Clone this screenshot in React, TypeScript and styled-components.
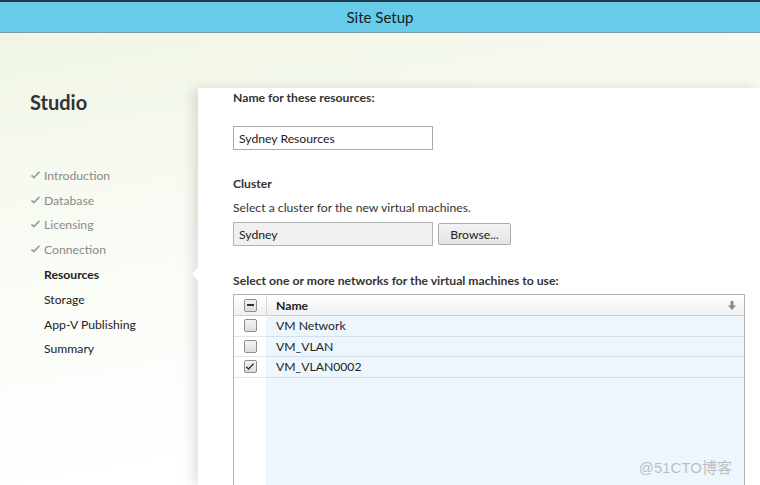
import React from 'react';
import styled, {createGlobalStyle} from 'styled-components';

const GlobalStyle = createGlobalStyle`
  html, body {
    margin: 0;
    padding: 0;
    background: #ffffff;
  }
  body {
    font-family: Lato, 'Noto Sans', sans-serif;
    font-size: 12.2px;
    color: #222;
  }
`;

const Window = styled.div`
  width: 760px;
  height: 485px;
  overflow: hidden;
  display: flex;
  flex-direction: column;
  position: relative;
  background: linear-gradient(170deg, #eef5e3 0%, #f5f9ee 25%, #fbfdf8 55%, #ffffff 80%);
`;

const TitleBar = styled.header`
  height: 30px;
  flex: none;
  border-top: 2px solid #1f3a48;
  border-bottom: 1px solid #7f9aa6;
  background: #67cbea;
  display: flex;
  align-items: center;
  justify-content: center;
  font-size: 15px;
  color: #1b1b1b;
  .title {
    margin-top: -1px;
  }
`;

const Body = styled.div`
  flex: 1;
  display: flex;
  min-height: 0;
`;

const Sidebar = styled.aside`
  width: 198px;
  flex: none;
  padding: 56px 0 0 30px;
  box-sizing: border-box;
  .studio {
    font-size: 20px;
    font-weight: 700;
    color: #333;
    margin: 0;
    line-height: 26px;
  }
`;

const StepList = styled.ul`
  list-style: none;
  margin: 48px 0 0 0;
  padding: 0;
`;

const Step = styled.li<{done?: boolean; current?: boolean}>`
  height: 24.8px;
  display: flex;
  align-items: center;
  color: ${p => (p.done ? '#8a8a8a' : '#222')};
  font-weight: ${p => (p.current ? 700 : 400)};
  .check {
    width: 14px;
    display: inline-flex;
    color: #9a9a9a;
  }
`;

const Panel = styled.main`
  flex: 1;
  margin-top: 55px;
  background: #fff;
  position: relative;
  padding: 0 0 0 35px;
  box-shadow: -5px 0 12px rgba(0, 0, 0, 0.12);
  &::before {
    content: '';
    position: absolute;
    left: -6px;
    top: 179px;
    border-style: solid;
    border-width: 7px 6px 7px 0;
    border-color: transparent #fff transparent transparent;
  }
`;

const Label = styled.div<{mt: number}>`
  margin-top: ${p => p.mt}px;
  font-weight: 700;
  color: #333;
  line-height: 16px;
`;

const Hint = styled.div`
  margin-top: 8px;
  color: #333;
  line-height: 16px;
`;

const Field = styled.div<{disabled?: boolean; mt: number}>`
  margin-top: ${p => p.mt}px;
  width: 200px;
  height: 24px;
  box-sizing: border-box;
  border: 1px solid ${p => (p.disabled ? '#b4b4b4' : '#a9a9a9')};
  background: ${p => (p.disabled ? '#f0f0f0' : '#fff')};
  padding: 0 5px;
  display: flex;
  align-items: center;
  color: #222;
`;

const FieldRow = styled.div`
  display: flex;
  align-items: flex-start;
  gap: 5px;
  margin-top: 6px;
  ${Field} {
    margin-top: 0;
  }
`;

const Button = styled.button`
  margin-top: 1px;
  width: 73px;
  height: 22px;
  border: 1px solid #acacac;
  border-radius: 2px;
  background: linear-gradient(#f3f3f3, #e4e4e4);
  font-family: inherit;
  font-size: 12.2px;
  color: #222;
  padding: 0;
`;

const Table = styled.div`
  margin-top: 5px;
  width: 512px;
  height: 200px;
  border: 1px solid #b3b3b3;
  box-sizing: border-box;
  display: grid;
  grid-template-columns: 32px 1fr;
  grid-template-rows: 21px repeat(3, 20.5px) 1fr;
  background: linear-gradient(to right, #fff 32px, #eef6fd 32px);
`;

const HeaderCell = styled.div<{first?: boolean}>`
  background: linear-gradient(#ffffff, #f0f0f0);
  border-bottom: 1px solid #d0d0d0;
  border-left: ${p => (p.first ? 'none' : '1px solid #d6d6d6')};
  display: flex;
  align-items: center;
  justify-content: ${p => (p.first ? 'center' : 'space-between')};
  padding: ${p => (p.first ? '0' : '0 8px 0 9px')};
  font-weight: 700;
  color: #222;
  .sort {
    color: #8a8a8a;
    display: inline-flex;
  }
`;

const Cell = styled.div<{first?: boolean}>`
  border-bottom: 1px solid ${p => (p.first ? '#e6e6e6' : '#d3e1ed')};
  background: ${p => (p.first ? '#fff' : '#eef6fd')};
  display: flex;
  align-items: center;
  justify-content: ${p => (p.first ? 'center' : 'flex-start')};
  padding: ${p => (p.first ? '0' : '0 0 0 10px')};
  color: #222;
`;

const Box = styled.span`
  width: 13px;
  height: 13px;
  box-sizing: border-box;
  border: 1px solid #8e8f8f;
  border-radius: 2px;
  background: linear-gradient(#f4f4f4, #dcdcdc);
  display: inline-flex;
  align-items: center;
  justify-content: center;
  .dash {
    width: 7px;
    height: 2px;
    background: #333;
  }
`;

const Watermark = styled.div`
  position: absolute;
  right: 28px;
  bottom: 8px;
  font-family: 'Liberation Sans', 'Noto Sans CJK SC', sans-serif;
  font-size: 15px;
  color: rgba(150, 150, 150, 0.6);
`;

const CheckIcon = ({size = 11, color = 'currentColor'}: {size?: number; color?: string}) => (
  <svg width={size} height={size} viewBox="0 0 12 12">
    <path d="M1 6.5 L4.3 9.6 L11 2.5 L9.6 1.4 L4.2 7.2 L2.3 5.2 Z" fill={color} />
  </svg>
);

const steps = [
  {name: 'Introduction', done: true},
  {name: 'Database', done: true},
  {name: 'Licensing', done: true},
  {name: 'Connection', done: true},
  {name: 'Resources', current: true},
  {name: 'Storage'},
  {name: 'App-V Publishing'},
  {name: 'Summary'},
];

const networks = [
  {name: 'VM Network', checked: false},
  {name: 'VM_VLAN', checked: false},
  {name: 'VM_VLAN0002', checked: true},
];

export default function App() {
  return (
    <Window>
      <GlobalStyle />
      <TitleBar>
        <span className="title">Site Setup</span>
      </TitleBar>
      <Body>
        <Sidebar>
          <h1 className="studio">Studio</h1>
          <StepList>
            {steps.map(s => (
              <Step key={s.name} done={s.done} current={s.current}>
                <span className="check">{s.done && <CheckIcon />}</span>
                {s.name}
              </Step>
            ))}
          </StepList>
        </Sidebar>
        <Panel>
          <Label mt={2}>Name for these resources:</Label>
          <Field mt={20}>Sydney Resources</Field>
          <Label mt={26}>Cluster</Label>
          <Hint>Select a cluster for the new virtual machines.</Hint>
          <FieldRow>
            <Field disabled mt={0}>Sydney</Field>
            <Button>Browse...</Button>
          </FieldRow>
          <Label mt={27}>Select one or more networks for the virtual machines to use:</Label>
          <Table>
            <HeaderCell first>
              <Box><span className="dash" /></Box>
            </HeaderCell>
            <HeaderCell>
              Name
              <span className="sort">
                <svg width="8" height="9" viewBox="0 0 8 9">
                  <path d="M2.5 0 H5.5 V4.5 H8 L4 9 L0 4.5 H2.5 Z" fill="#8a8a8a" />
                </svg>
              </span>
            </HeaderCell>
            {networks.map(n => (
              <React.Fragment key={n.name}>
                <Cell first>
                  <Box>{n.checked && <CheckIcon size={10} color="#333" />}</Box>
                </Cell>
                <Cell>{n.name}</Cell>
              </React.Fragment>
            ))}
          </Table>
        </Panel>
      </Body>
      <Watermark>@51CTO博客</Watermark>
    </Window>
  );
}
